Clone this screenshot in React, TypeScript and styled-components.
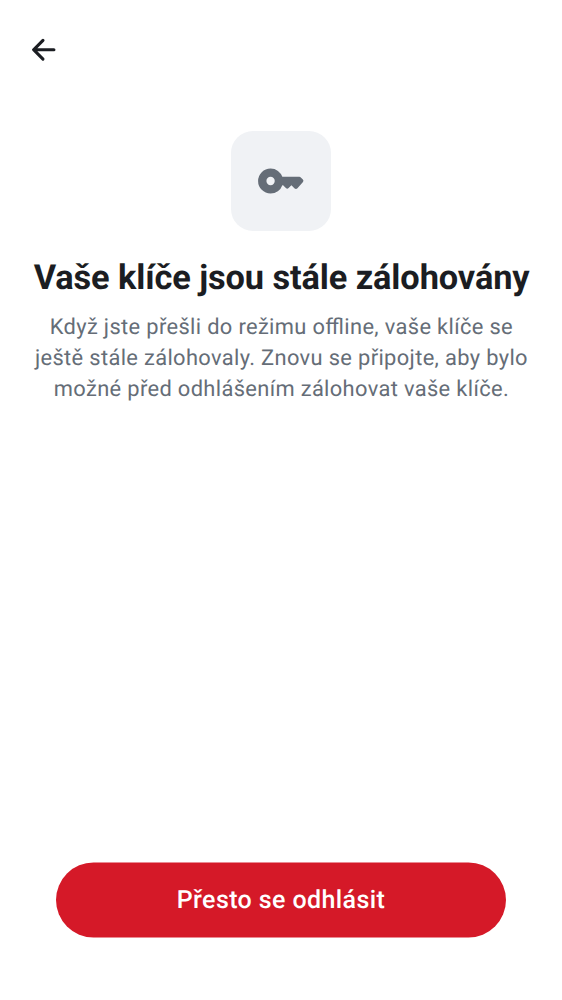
import React from 'react';
import styled, { createGlobalStyle } from 'styled-components';

const GlobalStyle = createGlobalStyle`
  * { box-sizing: border-box; }
  body {
    margin: 0;
    background: #fff;
    font-family: Roboto, "Noto Sans", sans-serif;
    text-rendering: geometricPrecision;
  }
`;

const Screen = styled.main`
  display: flex;
  flex-direction: column;
  width: 562px;
  height: 1000px;
  background: #ffffff;
`;

const TopBar = styled.header`
  display: flex;
  align-items: center;
  height: 100px;
  padding-left: 25px;
`;

const BackButton = styled.button`
  display: flex;
  padding: 0;
  border: 0;
  background: none;
  color: #1b1d22;
`;

const Content = styled.section`
  display: flex;
  flex: 1;
  flex-direction: column;
  align-items: center;
  padding-top: 31px;
`;

const IconTile = styled.div`
  display: flex;
  align-items: center;
  justify-content: center;
  width: 100px;
  height: 100px;
  border-radius: 22px;
  background: #f0f2f5;
  color: #656d77;
`;

const Title = styled.h1`
  margin: 25px 0 0;
  padding-left: 1.2px;
  color: #1b1d22;
  font-size: 34.375px;
  font-weight: 700;
  letter-spacing: -0.1px;
  line-height: 44px;
  white-space: nowrap;
`;

const Message = styled.p`
  margin: 12px 0 0;
  padding-left: 0.8px;
  color: #656d77;
  font-size: 21.875px;
  font-feature-settings: "liga" 1;
  letter-spacing: 0.35px;
  line-height: 31.2px;
  text-align: center;
  white-space: nowrap;
`;

const Footer = styled.footer`
  display: flex;
  padding: 0 56px 62px;
`;

const SignOutButton = styled.button`
  flex: 1;
  height: 75px;
  padding: 0;
  border: 0;
  border-radius: 38px;
  background: #d51928;
  color: #ffffff;
  font-family: inherit;
  font-size: 25px;
  font-weight: 500;
  letter-spacing: 0.4px;
  text-rendering: inherit;
  transform: translateY(-0.5px);
`;

export default function App() {
  return (
    <Screen>
      <GlobalStyle />
      <TopBar>
        <BackButton aria-label="Zpět">
          <svg width="37.5" height="37.5" viewBox="0 0 24 24" fill="currentColor">
            <path d="M12.207 5.293a1 1 0 0 1 0 1.414L7.914 11H18.5a1 1 0 1 1 0 2H7.914l4.293 4.293a1 1 0 0 1-1.414 1.414l-6-6a1 1 0 0 1 0-1.414l6-6a1 1 0 0 1 1.414 0" />
          </svg>
        </BackButton>
      </TopBar>
      <Content>
        <IconTile>
          <svg width="50" height="50" viewBox="0 0 24 24" fill="currentColor">
            <path fillRule="evenodd" d="M7 14q-.824 0-1.412-.588A1.93 1.93 0 0 1 5 12q0-.825.588-1.412A1.93 1.93 0 0 1 7 10q.824 0 1.412.588Q9 11.175 9 12t-.588 1.412A1.93 1.93 0 0 1 7 14m0 4q-2.5 0-4.25-1.75T1 12t1.75-4.25T7 6q2.025 0 3.538 1.15Q12.05 8.3 12.65 10h8.15q.42 0 .7.3l1 1q.56.6.05 1.22l-2.65 2.98q-.65.65-1.35.15L17 14l-1.35 1.35q-.65.65-1.3 0L13 14h-.35a5.9 5.9 0 0 1-2.175 2.9Q8.975 18 7 18" />
          </svg>
        </IconTile>
        <Title>Vaše klíče jsou stále zálohovány</Title>
        <Message>
          Když jste přešli do režimu offline, vaše klíče se<br />
          ještě stále zálohovaly. Znovu se připojte, aby bylo<br />
          možné před odhlášením zálohovat vaše klíče.
        </Message>
      </Content>
      <Footer>
        <SignOutButton>Přesto se odhlásit</SignOutButton>
      </Footer>
    </Screen>
  );
}
